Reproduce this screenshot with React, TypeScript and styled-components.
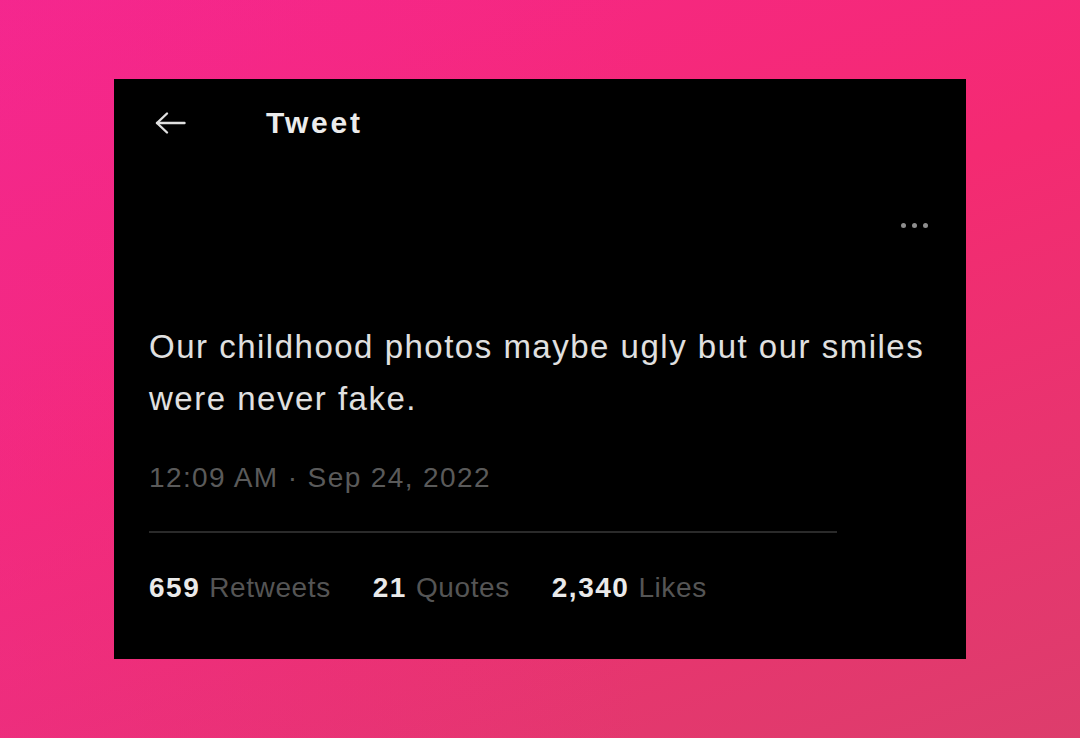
import React from "react";
import styled, {createGlobalStyle} from "styled-components";

const GlobalStyle = createGlobalStyle`
  html, body {
    margin: 0;
    padding: 0;
    height: 100%;
  }
  body {
    font-family: "Liberation Sans", Arial, sans-serif;
  }
`;

const Page = styled.div`
  width: 1080px;
  height: 738px;
  display: flex;
  align-items: center;
  justify-content: center;
  background: linear-gradient(160deg, #f7268a 0%, #f42a72 45%, #dd3d6c 100%);
  position: relative;
  overflow: hidden;

  &::before {
    content: "";
    position: absolute;
    inset: 0;
    background: linear-gradient(90deg, rgba(240, 40, 150, 0.35) 0%, rgba(240, 40, 150, 0) 60%);
  }
`;

const Card = styled.div`
  position: relative;
  width: 852px;
  height: 580px;
  box-sizing: border-box;
  background: #000;
  padding: 0 34px 0 35px;
  display: flex;
  flex-direction: column;
  color: #e2e2e2;
`;

const Header = styled.div`
  display: flex;
  align-items: center;
  height: 88px;
  padding-left: 6px;
`;

const BackArrow = styled.svg`
  width: 31px;
  height: 24px;
  margin-right: 80px;
`;

const Title = styled.div`
  font-size: 30px;
  font-weight: 700;
  color: #ececec;
  letter-spacing: 2.8px;
`;

const MoreRow = styled.div`
  display: flex;
  justify-content: flex-end;
  margin-top: 56px;
  padding-right: 4px;
`;

const Dot = styled.span`
  width: 5px;
  height: 5px;
  border-radius: 50%;
  background: #8e8e8e;
  margin-left: 6px;
`;

const Body = styled.p`
  margin: 93px 0 0 0;
  font-size: 33px;
  line-height: 52px;
  letter-spacing: 1.5px;
  color: #e0e0e0;
`;

const Timestamp = styled.div`
  margin-top: 37px;
  font-size: 28px;
  letter-spacing: 1.4px;
  color: #5a5a5a;
`;

const Divider = styled.div`
  margin-top: 37px;
  width: 688px;
  height: 2px;
  background: #2a2a2a;
`;

const Stats = styled.div`
  display: flex;
  gap: 42px;
  margin-top: 39px;
  font-size: 28px;
`;

const Stat = styled.div`
  display: flex;
  gap: 9px;
`;

const StatNum = styled.span`
  font-weight: 700;
  color: #eaeaea;
  letter-spacing: 1.5px;
`;

const StatLabel = styled.span`
  color: #555555;
  letter-spacing: 0.6px;
`;

const stats = [
    {num: "659", label: "Retweets"},
    {num: "21", label: "Quotes"},
    {num: "2,340", label: "Likes"},
];

export default function App() {
    return (
        <>
            <GlobalStyle/>
            <Page>
                <Card>
                    <Header>
                        <BackArrow viewBox="0 0 31 24" fill="none" stroke="#e0e0e0" strokeWidth="2.4"
                                   strokeLinecap="round" strokeLinejoin="round">
                            <path d="M29.5 12H2"/>
                            <path d="M12 2.5L2 12l10 9.5"/>
                        </BackArrow>
                        <Title>Tweet</Title>
                    </Header>
                    <MoreRow>
                        <Dot/><Dot/><Dot/>
                    </MoreRow>
                    <Body>
                        Our childhood photos maybe ugly but our smiles<br/>were never fake.
                    </Body>
                    <Timestamp>12:09 AM · Sep 24, 2022</Timestamp>
                    <Divider/>
                    <Stats>
                        {stats.map(s => (
                            <Stat key={s.label}>
                                <StatNum>{s.num}</StatNum>
                                <StatLabel>{s.label}</StatLabel>
                            </Stat>
                        ))}
                    </Stats>
                </Card>
            </Page>
        </>
    );
}
